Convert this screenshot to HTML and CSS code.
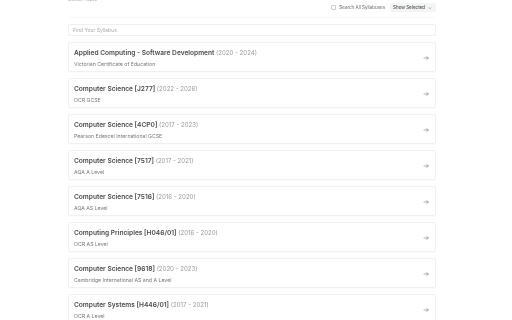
FILE: index.html
```html
<!DOCTYPE html>
<html lang="en">
<head>
  <meta charset="UTF-8">
  <title>Select Topic</title>
  <link rel="stylesheet" href="styles.css">
</head>
<body>
  <div class="page">
    <div class="label">Select Topic</div>
    <div class="toolbar">
      <label class="check"><span class="box"></span>Search All Syllabuses</label>
      <button class="show-btn">Show Selected <span class="chev">&#8964;</span></button>
    </div>
    <input class="search" type="text" placeholder="Find Your Syllabus">

    <div class="list">
      <div class="card">
        <div class="info">
          <div class="title">Applied Computing - Software Development <span class="years">(2020 - 2024)</span></div>
          <div class="board">Victorian Certificate of Education</div>
        </div>
        <svg class="arrow" viewBox="0 0 10 10"><path d="M1 5h8M6 2l3 3-3 3" fill="none" stroke="#777" stroke-width="1"/></svg>
      </div>
      <div class="card">
        <div class="info">
          <div class="title">Computer Science [J277] <span class="years">(2022 - 2026)</span></div>
          <div class="board">OCR GCSE</div>
        </div>
        <svg class="arrow" viewBox="0 0 10 10"><path d="M1 5h8M6 2l3 3-3 3" fill="none" stroke="#777" stroke-width="1"/></svg>
      </div>
      <div class="card">
        <div class="info">
          <div class="title">Computer Science [4CP0] <span class="years">(2017 - 2023)</span></div>
          <div class="board">Pearson Edexcel International GCSE</div>
        </div>
        <svg class="arrow" viewBox="0 0 10 10"><path d="M1 5h8M6 2l3 3-3 3" fill="none" stroke="#777" stroke-width="1"/></svg>
      </div>
      <div class="card">
        <div class="info">
          <div class="title">Computer Science [7517] <span class="years">(2017 - 2021)</span></div>
          <div class="board">AQA A Level</div>
        </div>
        <svg class="arrow" viewBox="0 0 10 10"><path d="M1 5h8M6 2l3 3-3 3" fill="none" stroke="#777" stroke-width="1"/></svg>
      </div>
      <div class="card">
        <div class="info">
          <div class="title">Computer Science [7516] <span class="years">(2016 - 2020)</span></div>
          <div class="board">AQA AS Level</div>
        </div>
        <svg class="arrow" viewBox="0 0 10 10"><path d="M1 5h8M6 2l3 3-3 3" fill="none" stroke="#777" stroke-width="1"/></svg>
      </div>
      <div class="card">
        <div class="info">
          <div class="title">Computing Principles [H046/01] <span class="years">(2016 - 2020)</span></div>
          <div class="board">OCR AS Level</div>
        </div>
        <svg class="arrow" viewBox="0 0 10 10"><path d="M1 5h8M6 2l3 3-3 3" fill="none" stroke="#777" stroke-width="1"/></svg>
      </div>
      <div class="card">
        <div class="info">
          <div class="title">Computer Science [9618] <span class="years">(2020 - 2023)</span></div>
          <div class="board">Cambridge International AS and A Level</div>
        </div>
        <svg class="arrow" viewBox="0 0 10 10"><path d="M1 5h8M6 2l3 3-3 3" fill="none" stroke="#777" stroke-width="1"/></svg>
      </div>
      <div class="card">
        <div class="info">
          <div class="title">Computer Systems [H446/01] <span class="years">(2017 - 2021)</span></div>
          <div class="board">OCR A Level</div>
        </div>
        <svg class="arrow" viewBox="0 0 10 10"><path d="M1 5h8M6 2l3 3-3 3" fill="none" stroke="#777" stroke-width="1"/></svg>
      </div>
    </div>
  </div>
</body>
</html>
```

FILE: styles.css
```css
* {
  box-sizing: border-box;
}

body {
  margin: 0;
  background: #fff;
  font-family: Inter, "Noto Sans", sans-serif;
  color: #333;
  overflow: hidden;
}

.page {
  width: 368px;
  margin: -4px 0 0 68px;
  will-change: transform;
}

.label {
  font-size: 5px;
  line-height: 6px;
  color: #aaa;
}

.toolbar {
  display: flex;
  justify-content: flex-end;
  align-items: center;
  gap: 5px;
  padding: 1px 0 5px;
  border-bottom: 1px solid #f7f7f7;
}

.check {
  display: flex;
  align-items: center;
  gap: 3px;
  font-size: 4.5px;
  color: #666;
}

.box {
  width: 5px;
  height: 5px;
  border: 1px solid #ccc;
  border-radius: 1px;
}

.show-btn {
  font-family: inherit;
  font-size: 4.5px;
  font-weight: 500;
  color: #555;
  background: #f3f4f6;
  border: none;
  border-radius: 2px;
  height: 9px;
  padding: 0 4px 0 3px;
  display: flex;
  align-items: center;
  gap: 3px;
}

.chev {
  font-size: 5px;
  color: #999;
  line-height: 1;
}

.search {
  display: block;
  width: 100%;
  height: 12px;
  margin-top: 6px;
  padding: 0 4px;
  border: 1px solid #f0f0f0;
  border-radius: 2px;
  font-family: inherit;
  font-size: 5px;
  outline: none;
}

.search::placeholder {
  color: #aaa;
}

.list {
  display: flex;
  flex-direction: column;
  gap: 6px;
  margin-top: 6px;
}

.card {
  display: flex;
  align-items: center;
  height: 30px;
  padding: 1px 6px 0 5px;
  border: 1px solid #f0f0f0;
  border-radius: 2px;
  box-shadow: 0 1px 1px rgba(0, 0, 0, 0.02);
}

.info {
  flex: 1;
}

.title {
  font-size: 6.6px;
  font-weight: 600;
  color: #4a4a4a;
}

.years {
  font-size: 6.1px;
  font-weight: 400;
  color: #999;
}

.board {
  margin-top: 4px;
  font-size: 5.2px;
  color: #777;
}

.arrow {
  width: 6px;
  height: 6px;
}
```
